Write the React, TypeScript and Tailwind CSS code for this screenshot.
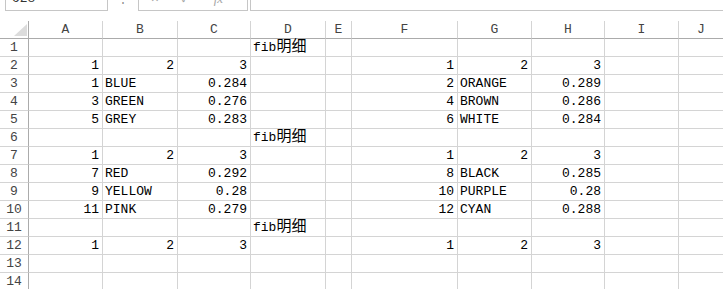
import React from "react";

type Cell = { v: string; t?: "n" | "s" };

const cols = ["A", "B", "C", "D", "E", "F", "G", "H", "I", "J"];

const n = (v: string): Cell => ({ v, t: "n" });
const s = (v: string): Cell => ({ v, t: "s" });
const e: Cell = { v: "" };

const rows: Cell[][] = [
  [e, e, e, s("fib明细"), e, e, e, e, e, e],
  [n("1"), n("2"), n("3"), e, e, n("1"), n("2"), n("3"), e, e],
  [n("1"), s("BLUE"), n("0.284"), e, e, n("2"), s("ORANGE"), n("0.289"), e, e],
  [n("3"), s("GREEN"), n("0.276"), e, e, n("4"), s("BROWN"), n("0.286"), e, e],
  [n("5"), s("GREY"), n("0.283"), e, e, n("6"), s("WHITE"), n("0.284"), e, e],
  [e, e, e, s("fib明细"), e, e, e, e, e, e],
  [n("1"), n("2"), n("3"), e, e, n("1"), n("2"), n("3"), e, e],
  [n("7"), s("RED"), n("0.292"), e, e, n("8"), s("BLACK"), n("0.285"), e, e],
  [n("9"), s("YELLOW"), n("0.28"), e, e, n("10"), s("PURPLE"), n("0.28"), e, e],
  [n("11"), s("PINK"), n("0.279"), e, e, n("12"), s("CYAN"), n("0.288"), e, e],
  [e, e, e, s("fib明细"), e, e, e, e, e, e],
  [n("1"), n("2"), n("3"), e, e, n("1"), n("2"), n("3"), e, e],
  [e, e, e, e, e, e, e, e, e, e],
  [e, e, e, e, e, e, e, e, e, e],
];

function renderText(v: string) {
  const m = v.match(/^([^\u4e00-\u9fff]*)([\u4e00-\u9fff]+)$/);
  if (m) {
    return (
      <>
        {m[1]}
        <span className="text-[15px] leading-[15px]">{m[2]}</span>
      </>
    );
  }
  return v;
}

export default function App() {
  return (
    <div
      className="w-[723px] h-[289px] overflow-hidden bg-white text-black"
      style={{ fontFamily: '"Liberation Mono", "Noto Sans CJK SC", monospace' }}
    >
      {/* formula bar (top cut off) */}
      <div className="-mt-[14px] flex h-[25px] items-stretch">
        <div className="ml-[5px] w-[103px] border border-[#c6c6c6] flex items-center pl-[6px] text-[13px] text-[#333]">
          O28
        </div>
        <div className="w-[30px] flex items-center justify-center text-[#888] text-[12px]">⋮</div>
        <div className="w-[110px] border border-[#c6c6c6] flex items-center text-[#a6a6a6]">
          <span className="ml-[12px] text-[13px]">✕</span>
          <span className="ml-[22px] text-[13px]">✓</span>
          <span className="ml-[24px] text-[13px] italic" style={{ fontFamily: '"Liberation Serif", serif' }}>
            fx
          </span>
        </div>
        <div className="ml-[2px] flex-1 border border-r-0 border-[#c6c6c6]" />
      </div>

      {/* sheet grid */}
      <div
        className="mt-[10px] grid text-[13px]"
        style={{
          gridTemplateColumns: "29px 74px 75px 73px 75px 26px 106px 74px 73px 74px 1fr",
        }}
      >
        {/* header row */}
        <div className="relative h-[18px] border-r border-b border-[#ababab] bg-white">
          <svg className="absolute right-[1px] bottom-[2px]" width="13" height="12" viewBox="0 0 13 12">
            <polygon points="13,0 13,12 0,12" fill="#dcdcdc" />
          </svg>
        </div>
        {cols.map((c, i) => (
          <div
            key={c}
            className={`h-[18px] flex items-end justify-center pb-[1px] leading-[15px] text-[#444] border-b border-b-[#ababab] ${
              i < cols.length - 1 ? "border-r border-r-[#d4d4d4]" : ""
            }`}
          >
            {c}
          </div>
        ))}

        {rows.map((r, ri) => (
          <React.Fragment key={ri}>
            <div className="h-[18px] flex items-end justify-center pb-[1px] leading-[15px] text-[#444] border-r border-r-[#ababab] border-b border-b-[#d4d4d4]">
              {ri + 1}
            </div>
            {r.map((cell, ci) => (
              <div
                key={ci}
                className={`h-[18px] flex items-end pb-[1px] leading-[15px] whitespace-nowrap border-b border-[#d4d4d4] ${
                  ci < r.length - 1 ? "border-r" : ""
                } ${cell.t === "n" ? "justify-end pr-[3px]" : "justify-start pl-[2px]"}`}
              >
                {renderText(cell.v)}
              </div>
            ))}
          </React.Fragment>
        ))}
      </div>
    </div>
  );
}
